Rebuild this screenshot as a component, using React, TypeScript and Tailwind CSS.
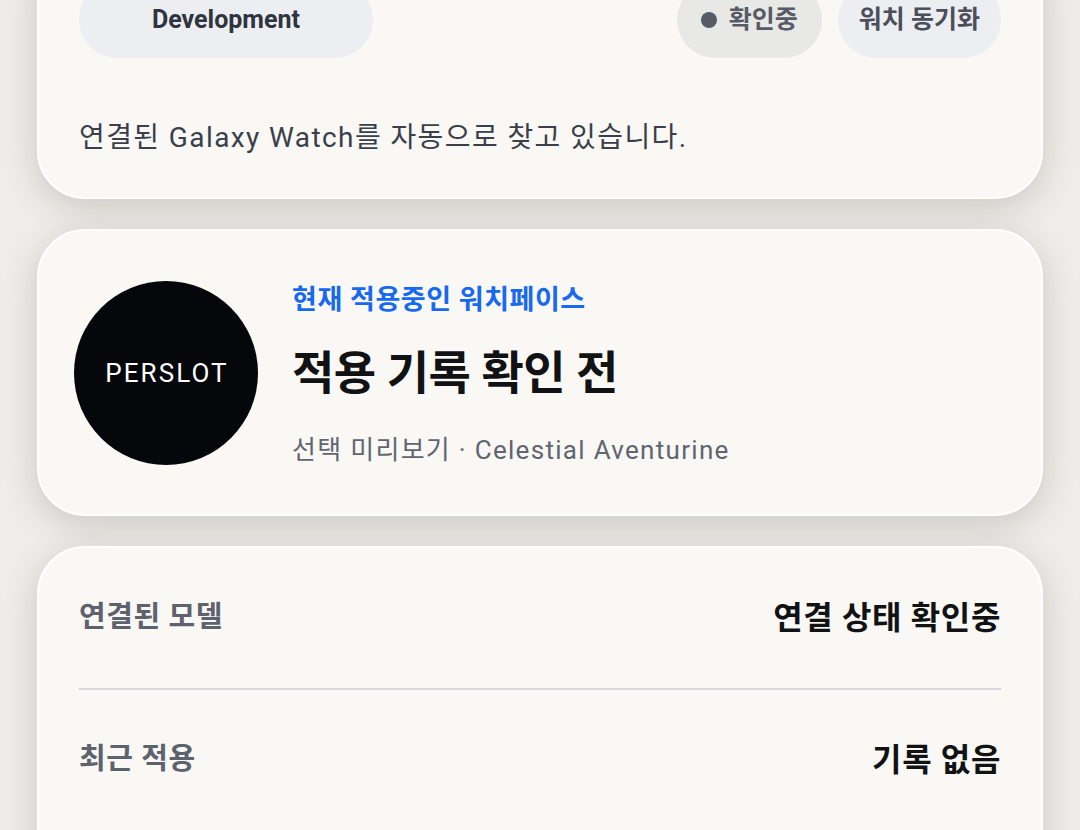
export default function App() {
  return (
    <div className="h-[830px] overflow-hidden bg-[#eeede9] px-[37px] font-['Roboto','Noto_Sans_CJK_KR',sans-serif] [font-feature-settings:'palt']">
      <div className="-mt-[60px] flex flex-col gap-[30px]">
        {/* Card 1 */}
        <div className="rounded-[48px] border-2 border-white bg-[#f9f8f5] px-[40px] pt-[40px] pb-[39px] shadow-[0_8px_34px_rgba(60,55,45,0.2)]">
          <div className="flex items-center justify-between">
            <div className="flex h-[76px] w-[294px] items-center justify-center rounded-full bg-[#edeef2] text-[25px] font-bold text-[#2e3440]">
              Development
            </div>
            <div className="flex items-center gap-[16px]">
              <div className="flex h-[76px] items-center gap-[12px] rounded-full bg-[#e8e8e6] px-[24px] text-[25px] font-bold text-[#565b66]">
                <span className="h-[16px] w-[16px] rounded-full bg-[#565b66]" />
                <span>확인중</span>
              </div>
              <div className="flex h-[76px] items-center rounded-full bg-[#edeef2] px-[21px] text-[25px] font-bold text-[#4a4f5a]">
                워치 동기화
              </div>
            </div>
          </div>
          <p className="mt-[60px] text-[28px] leading-[40px] tracking-[0.05em] text-[#3a3f4a]">
            연결된 Galaxy Watch를 자동으로 찾고 있습니다.
          </p>
        </div>

        {/* Card 2 */}
        <div className="flex items-center gap-[34px] rounded-[48px] border-2 border-white bg-[#f9f8f5] pt-[50px] pb-[49px] pl-[35px] pr-[40px] shadow-[0_8px_34px_rgba(60,55,45,0.2)]">
          <div className="flex h-[184px] w-[184px] shrink-0 items-center justify-center rounded-full bg-[#05070a] pl-[2px] text-[26px] tracking-[0.08em] text-white">
            PERSLOT
          </div>
          <div className="flex flex-col pt-[3px]">
            <div className="text-[27px] font-bold leading-[30px] tracking-[0.02em] text-[#1769f0]">현재 적용중인 워치페이스</div>
            <div className="mt-[30px] text-[46px] font-bold leading-[56px] tracking-[-0.01em] text-[#111214]">적용 기록 확인 전</div>
            <div className="mt-[34px] text-[26px] leading-[30px] tracking-[0.05em] text-[#60656f]">
              선택 미리보기 · Celestial Aventurine
            </div>
          </div>
        </div>

        {/* Card 3 */}
        <div className="rounded-[48px] border-2 border-white bg-[#f9f8f5] px-[40px] shadow-[0_8px_34px_rgba(60,55,45,0.2)]">
          <div className="flex h-[140px] items-center justify-between">
            <span className="text-[29px] font-bold tracking-[0.02em] text-[#5d626d]">연결된 모델</span>
            <span className="text-[32px] font-bold tracking-[0.02em] text-[#111214]">연결 상태 확인중</span>
          </div>
          <div className="h-[2px] bg-[#d6d7db]" />
          <div className="flex h-[140px] items-center justify-between">
            <span className="text-[29px] font-bold tracking-[0.02em] text-[#5d626d]">최근 적용</span>
            <span className="text-[32px] font-bold tracking-[0.02em] text-[#111214]">기록 없음</span>
          </div>
          <div className="h-[60px]" />
        </div>
      </div>
    </div>
  );
}
